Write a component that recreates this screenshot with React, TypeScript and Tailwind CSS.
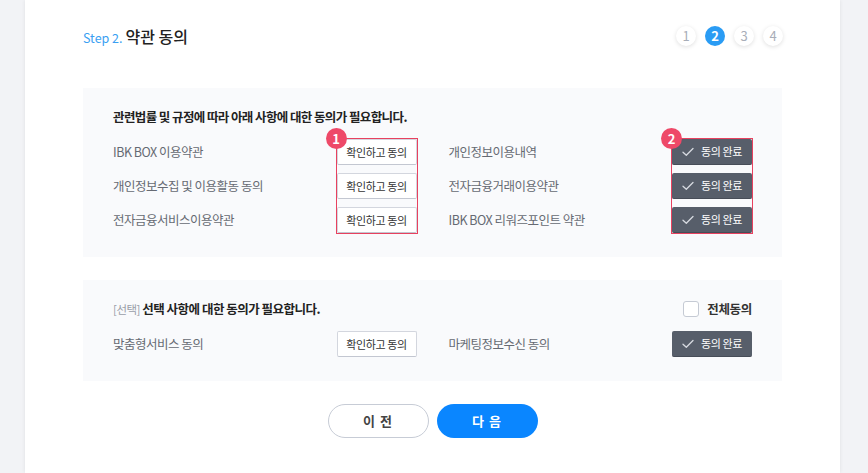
import React from "react";

const font = { fontFamily: '"Noto Sans CJK KR", "Noto Sans", sans-serif' };

function Check() {
  return (
    <svg width="12" height="10" viewBox="0 0 12 10" fill="none" className="mr-[7px]">
      <path d="M1 5.2 L4.3 8.3 L11 1.5" stroke="#d7dae0" strokeWidth="1.3" strokeLinecap="round" strokeLinejoin="round" />
    </svg>
  );
}

function ConfirmBtn() {
  return (
    <button className="w-[80px] h-[26px] bg-white border border-[#d3d6de] border-b-[#c3c7d1] rounded-[2px] text-[11px] text-[#333] flex items-center justify-center tracking-[-0.4px]">
      확인하고 동의
    </button>
  );
}

function DoneBtn() {
  return (
    <button className="w-[80px] h-[26px] bg-[#575e6a] border-b border-[#474d58] rounded-[2px] text-[11px] text-white flex items-center justify-center tracking-[-0.4px]">
      <Check />
      동의 완료
    </button>
  );
}

function Row({ label, children }: { label: string; children: React.ReactNode }) {
  return (
    <div className="flex items-center justify-between h-[26px]">
      <span className="text-[12.5px] text-[#666a73] tracking-[-0.5px]">{label}</span>
      {children}
    </div>
  );
}

function Badge({ n }: { n: string }) {
  return (
    <div className="absolute -left-[11px] -top-[11px] w-[21px] h-[21px] rounded-full bg-[#ee4968] text-white text-[13px] font-bold flex items-center justify-center leading-none">
      {n}
    </div>
  );
}

export default function App() {
  return (
    <div className="w-[868px] h-[473px] bg-[#f2f3f6] overflow-hidden" style={font}>
      <div className="ml-[25px] w-[815px] h-[473px] bg-white shadow-[0_0_4px_rgba(0,0,0,0.08)] px-[58px] pt-[24px]">
        <div className="flex items-center justify-between h-[24px]">
          <div className="flex items-baseline gap-[3px]">
            <span className="text-[12.5px] text-[#3a9ff2]">Step 2.</span>
            <span className="text-[16px] text-[#222] font-medium">약관 동의</span>
          </div>
          <div className="flex items-center gap-[9px] mr-[-1px]">
            {["1", "2", "3", "4"].map((n) => (
              <div
                key={n}
                className={
                  n === "2"
                    ? "w-[20px] h-[20px] rounded-full bg-[#2a9cf4] text-white text-[13px] font-bold flex items-center justify-center"
                    : "w-[20px] h-[20px] rounded-full bg-white shadow-[0_1px_4px_rgba(0,0,0,0.13)] text-[#a8adb8] text-[13px] flex items-center justify-center"
                }
              >
                {n}
              </div>
            ))}
          </div>
        </div>

        <div className="mt-[40px] bg-[#f9fafc] px-[30px] pt-[19px] pb-[24px]">
          <div className="text-[12.5px] font-bold text-[#222] h-[20px] leading-[20px] tracking-[-0.6px]">
            관련법률 및 규정에 따라 아래 사항에 대한 동의가 필요합니다.
          </div>
          <div className="mt-[12px] grid grid-cols-2 gap-x-[32px]">
            <div className="relative">
              <div className="flex flex-col gap-[8px]">
                <Row label="IBK BOX 이용약관"><ConfirmBtn /></Row>
                <Row label="개인정보수집 및 이용활동 동의"><ConfirmBtn /></Row>
                <Row label="전자금융서비스이용약관"><ConfirmBtn /></Row>
              </div>
              <div className="absolute right-[-1px] top-[-1px] w-[82px] h-[96px] border border-[#e8415f]">
                <Badge n="1" />
              </div>
            </div>
            <div className="relative">
              <div className="flex flex-col gap-[8px]">
                <Row label="개인정보이용내역"><DoneBtn /></Row>
                <Row label="전자금융거래이용약관"><DoneBtn /></Row>
                <Row label="IBK BOX 리워즈포인트 약관"><DoneBtn /></Row>
              </div>
              <div className="absolute right-[-1px] top-[-1px] w-[82px] h-[96px] border border-[#e8415f]">
                <Badge n="2" />
              </div>
            </div>
          </div>
        </div>

        <div className="mt-[23px] bg-[#f9fafc] px-[30px] pt-[21px] pb-[24px]">
          <div className="flex items-center justify-between h-[16px]">
            <div className="text-[12.5px] tracking-[-0.5px]">
              <span className="text-[#9a9ea8] text-[11.5px]">[선택]</span>{" "}
              <span className="font-bold text-[#222]">선택 사항에 대한 동의가 필요합니다.</span>
            </div>
            <div className="flex items-center gap-[8px]">
              <div className="w-[16px] h-[16px] rounded-[3px] border border-[#c5cad4] bg-white" />
              <span className="text-[12.5px] font-bold text-[#333] tracking-[-0.3px]">전체동의</span>
            </div>
          </div>
          <div className="mt-[14px] grid grid-cols-2 gap-x-[32px]">
            <Row label="맞춤형서비스 동의"><ConfirmBtn /></Row>
            <Row label="마케팅정보수신 동의"><DoneBtn /></Row>
          </div>
        </div>

        <div className="mt-[23px] flex justify-center gap-[8px]">
          <button className="w-[101px] h-[34px] rounded-full border border-[#c7ccd6] bg-white text-[13px] font-bold text-[#444] tracking-[1px]">
            이 전
          </button>
          <button className="w-[101px] h-[34px] rounded-full bg-[#0a86ff] text-[13px] font-bold text-white tracking-[1px]">
            다 음
          </button>
        </div>
      </div>
    </div>
  );
}
